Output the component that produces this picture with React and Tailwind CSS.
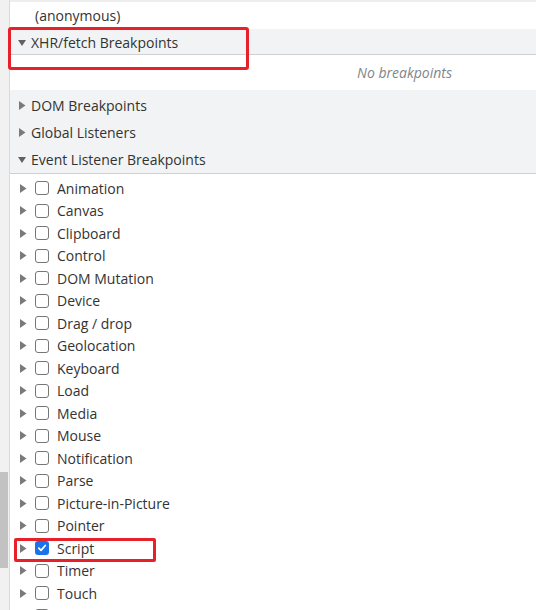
import React from "react";

const events = [
  "Animation",
  "Canvas",
  "Clipboard",
  "Control",
  "DOM Mutation",
  "Device",
  "Drag / drop",
  "Geolocation",
  "Keyboard",
  "Load",
  "Media",
  "Mouse",
  "Notification",
  "Parse",
  "Picture-in-Picture",
  "Pointer",
  "Script",
  "Timer",
  "Touch",
  "",
];

function Arrow({ open }) {
  return (
    <svg width="8" height="9" viewBox="0 0 8 9" className="shrink-0">
      {open ? (
        <path d="M0 2 L8 2 L4 8 Z" fill="#5f6368" />
      ) : (
        <path d="M1 0 L7.5 4.5 L1 9 Z" fill="#7a7a7a" />
      )}
    </svg>
  );
}

function Header({ open, children }) {
  return (
    <div className="flex items-center h-[27px] pl-[8px] gap-[5px] text-[#333333]">
      <Arrow open={open} />
      <span>{children}</span>
    </div>
  );
}

function Check({ checked }) {
  if (checked) {
    return (
      <div className="w-[14px] h-[14px] rounded-[3px] bg-[#1a73e8] flex items-center justify-center shrink-0">
        <svg width="10" height="10" viewBox="0 0 10 10">
          <path d="M1.8 5.2 L4 7.3 L8.3 2.5" stroke="#fff" strokeWidth="1.8" fill="none" strokeLinecap="round" strokeLinejoin="round" />
        </svg>
      </div>
    );
  }
  return <div className="w-[14px] h-[14px] rounded-[3px] border border-[#767676] bg-white shrink-0" />;
}

export default function App() {
  return (
    <div
      className="relative w-[536px] h-[610px] overflow-hidden bg-white flex text-[14px] text-[#333333]"
      style={{ fontFamily: '"Open Sans", "Noto Sans", sans-serif' }}
    >
      {/* left gutter with scrollbar */}
      <div className="w-[10px] shrink-0 bg-[#f1f1f1] border-r border-[#dadada] relative">
        <div className="absolute left-0 top-[472px] w-[8px] h-[96px] bg-[#c2c2c2]" />
      </div>

      <div className="flex-1 min-w-0">
        <div className="h-[2px] bg-[#eeeeee]" />
        <div className="h-[27px] flex items-center pl-[25px]">(anonymous)</div>

        <div className="h-[26px] bg-[#f1f3f4] border-b border-[#d0d0d0]">
          <Header open>XHR/fetch Breakpoints</Header>
        </div>
        <div className="h-[35px] flex items-center justify-end pr-[84px] italic text-[#80868b]">
          No breakpoints
        </div>

        <div className="bg-[#f1f3f4] border-b border-[#d0d0d0] pt-[2px]">
          <Header>DOM Breakpoints</Header>
          <Header>Global Listeners</Header>
          <Header open>Event Listener Breakpoints</Header>
        </div>

        <div className="pt-[3px]">
          {events.map((e, i) => (
            <div key={i} className="flex items-center h-[22.5px] pl-[9px]">
              <Arrow />
              <div className="ml-[8px]">
                <Check checked={e === "Script"} />
              </div>
              <span className="ml-[8px]">{e}</span>
            </div>
          ))}
        </div>
      </div>

      {/* annotation boxes */}
      <div className="absolute left-[8px] top-[27px] w-[241px] h-[43px] border-[3px] border-[#e8202a] rounded-[3px]" />
      <div className="absolute left-[14px] top-[538px] w-[142px] h-[24px] border-[3px] border-[#e8202a] rounded-[2px]" />
    </div>
  );
}
